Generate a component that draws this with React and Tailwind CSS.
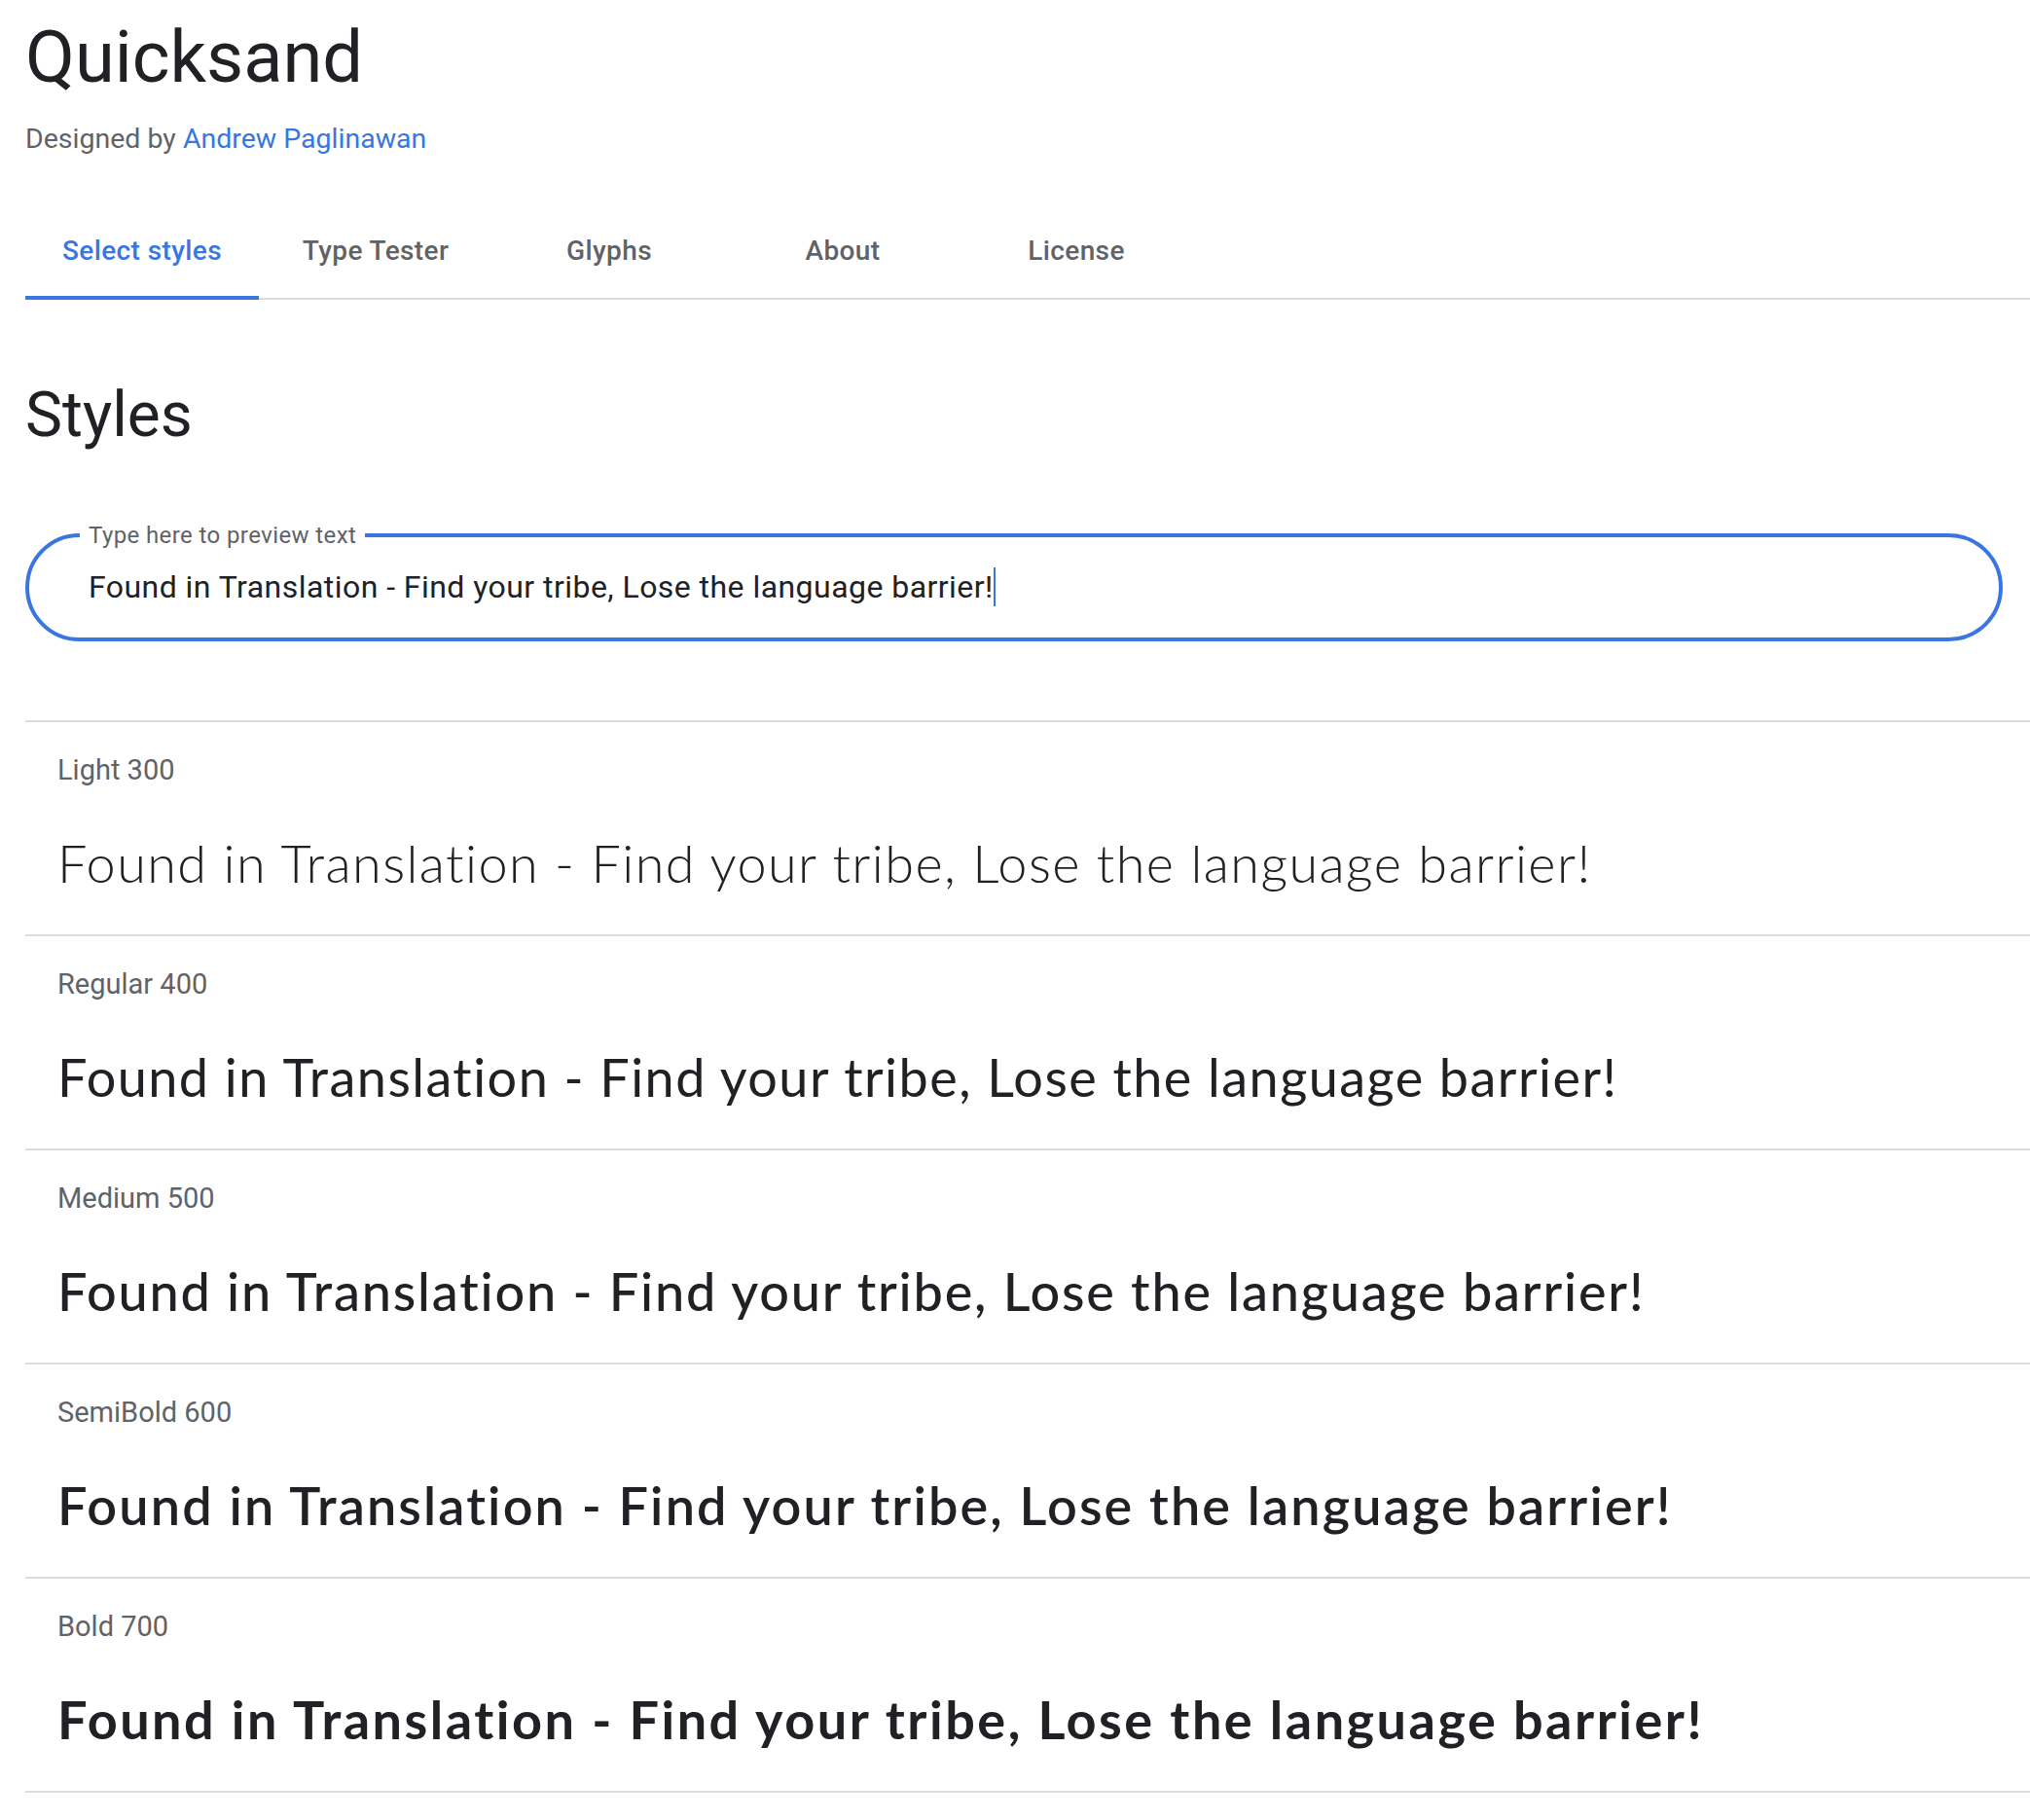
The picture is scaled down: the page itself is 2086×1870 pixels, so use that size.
import { useState } from "react";

const tabs = ["Select styles", "Type Tester", "Glyphs", "About", "License"];

// letter spacing widens Lato to the width the original face takes at each weight
const styles = [
  { label: "Light 300", weight: "font-light tracking-[1.4px]" },
  { label: "Regular 400", weight: "font-normal tracking-[1.45px]" },
  { label: "Medium 500", weight: "font-medium tracking-[1.8px]" },
  { label: "SemiBold 600", weight: "font-semibold tracking-[2.15px]" },
  { label: "Bold 700", weight: "font-bold tracking-[2.5px]" },
];

const sample = "Found in Translation - Find your tribe, Lose the language barrier!";

export default function App() {
  const [active, setActive] = useState(0);

  return (
    <div className="min-h-screen bg-white pl-[26px] pt-[22px] text-[#202124] font-['Roboto','Liberation_Sans',sans-serif]">
      <h1 className="text-[74px] leading-none font-normal">Quicksand</h1>
      <p className="mt-[33px] text-[28.5px] leading-none text-[#5f6368]">
        Designed by{" "}
        <a href="#designer" className="text-[#3a76e0]">
          Andrew Paglinawan
        </a>
      </p>

      {/* Tabs */}
      <div className="mt-[66px] flex border-b-2 border-[#dadce0]">
        {tabs.map((tab, idx) => (
          <button
            key={tab}
            onClick={() => setActive(idx)}
            className={`-mb-[2px] w-[240px] pt-[20px] pb-[32px] border-b-4 text-[28px] leading-none font-medium tracking-[0.4px] ${
              idx === active ? "border-[#3a76e0] text-[#3a76e0]" : "border-transparent text-[#5f6368]"
            }`}
          >
            {tab}
          </button>
        ))}
      </div>

      <h2 className="mt-[87px] text-[64px] leading-none font-normal">Styles</h2>

      {/* Preview input */}
      <div className="relative mt-[89px] mr-[28px] h-[111px] rounded-full border-4 border-[#3a76e0] flex items-center pl-[61px]">
        <span className="absolute left-[52px] -top-[14px] bg-white px-[9px] text-[24px] leading-none tracking-[0.4px] text-[#5f6368]">
          Type here to preview text
        </span>
        <span className="text-[32px] leading-none tracking-[0.45px] text-[#202124]">{sample}</span>
        <span className="inline-block w-[2px] h-[40px] bg-[#3a76e0]" />
      </div>

      {/* Style rows */}
      <div className="mt-[81px] border-b-2 border-[#dadce0]">
        {styles.map((s) => (
          <div key={s.label} className="border-t-2 border-[#dadce0] pl-[33px] pt-[35px] pb-[46px]">
            <div className="text-[29px] leading-none text-[#5f6368]">{s.label}</div>
            <div className={`mt-[54px] text-[54px] leading-none whitespace-nowrap font-['Lato',sans-serif] ${s.weight}`}>
              {sample}
            </div>
          </div>
        ))}
      </div>
    </div>
  );
}
